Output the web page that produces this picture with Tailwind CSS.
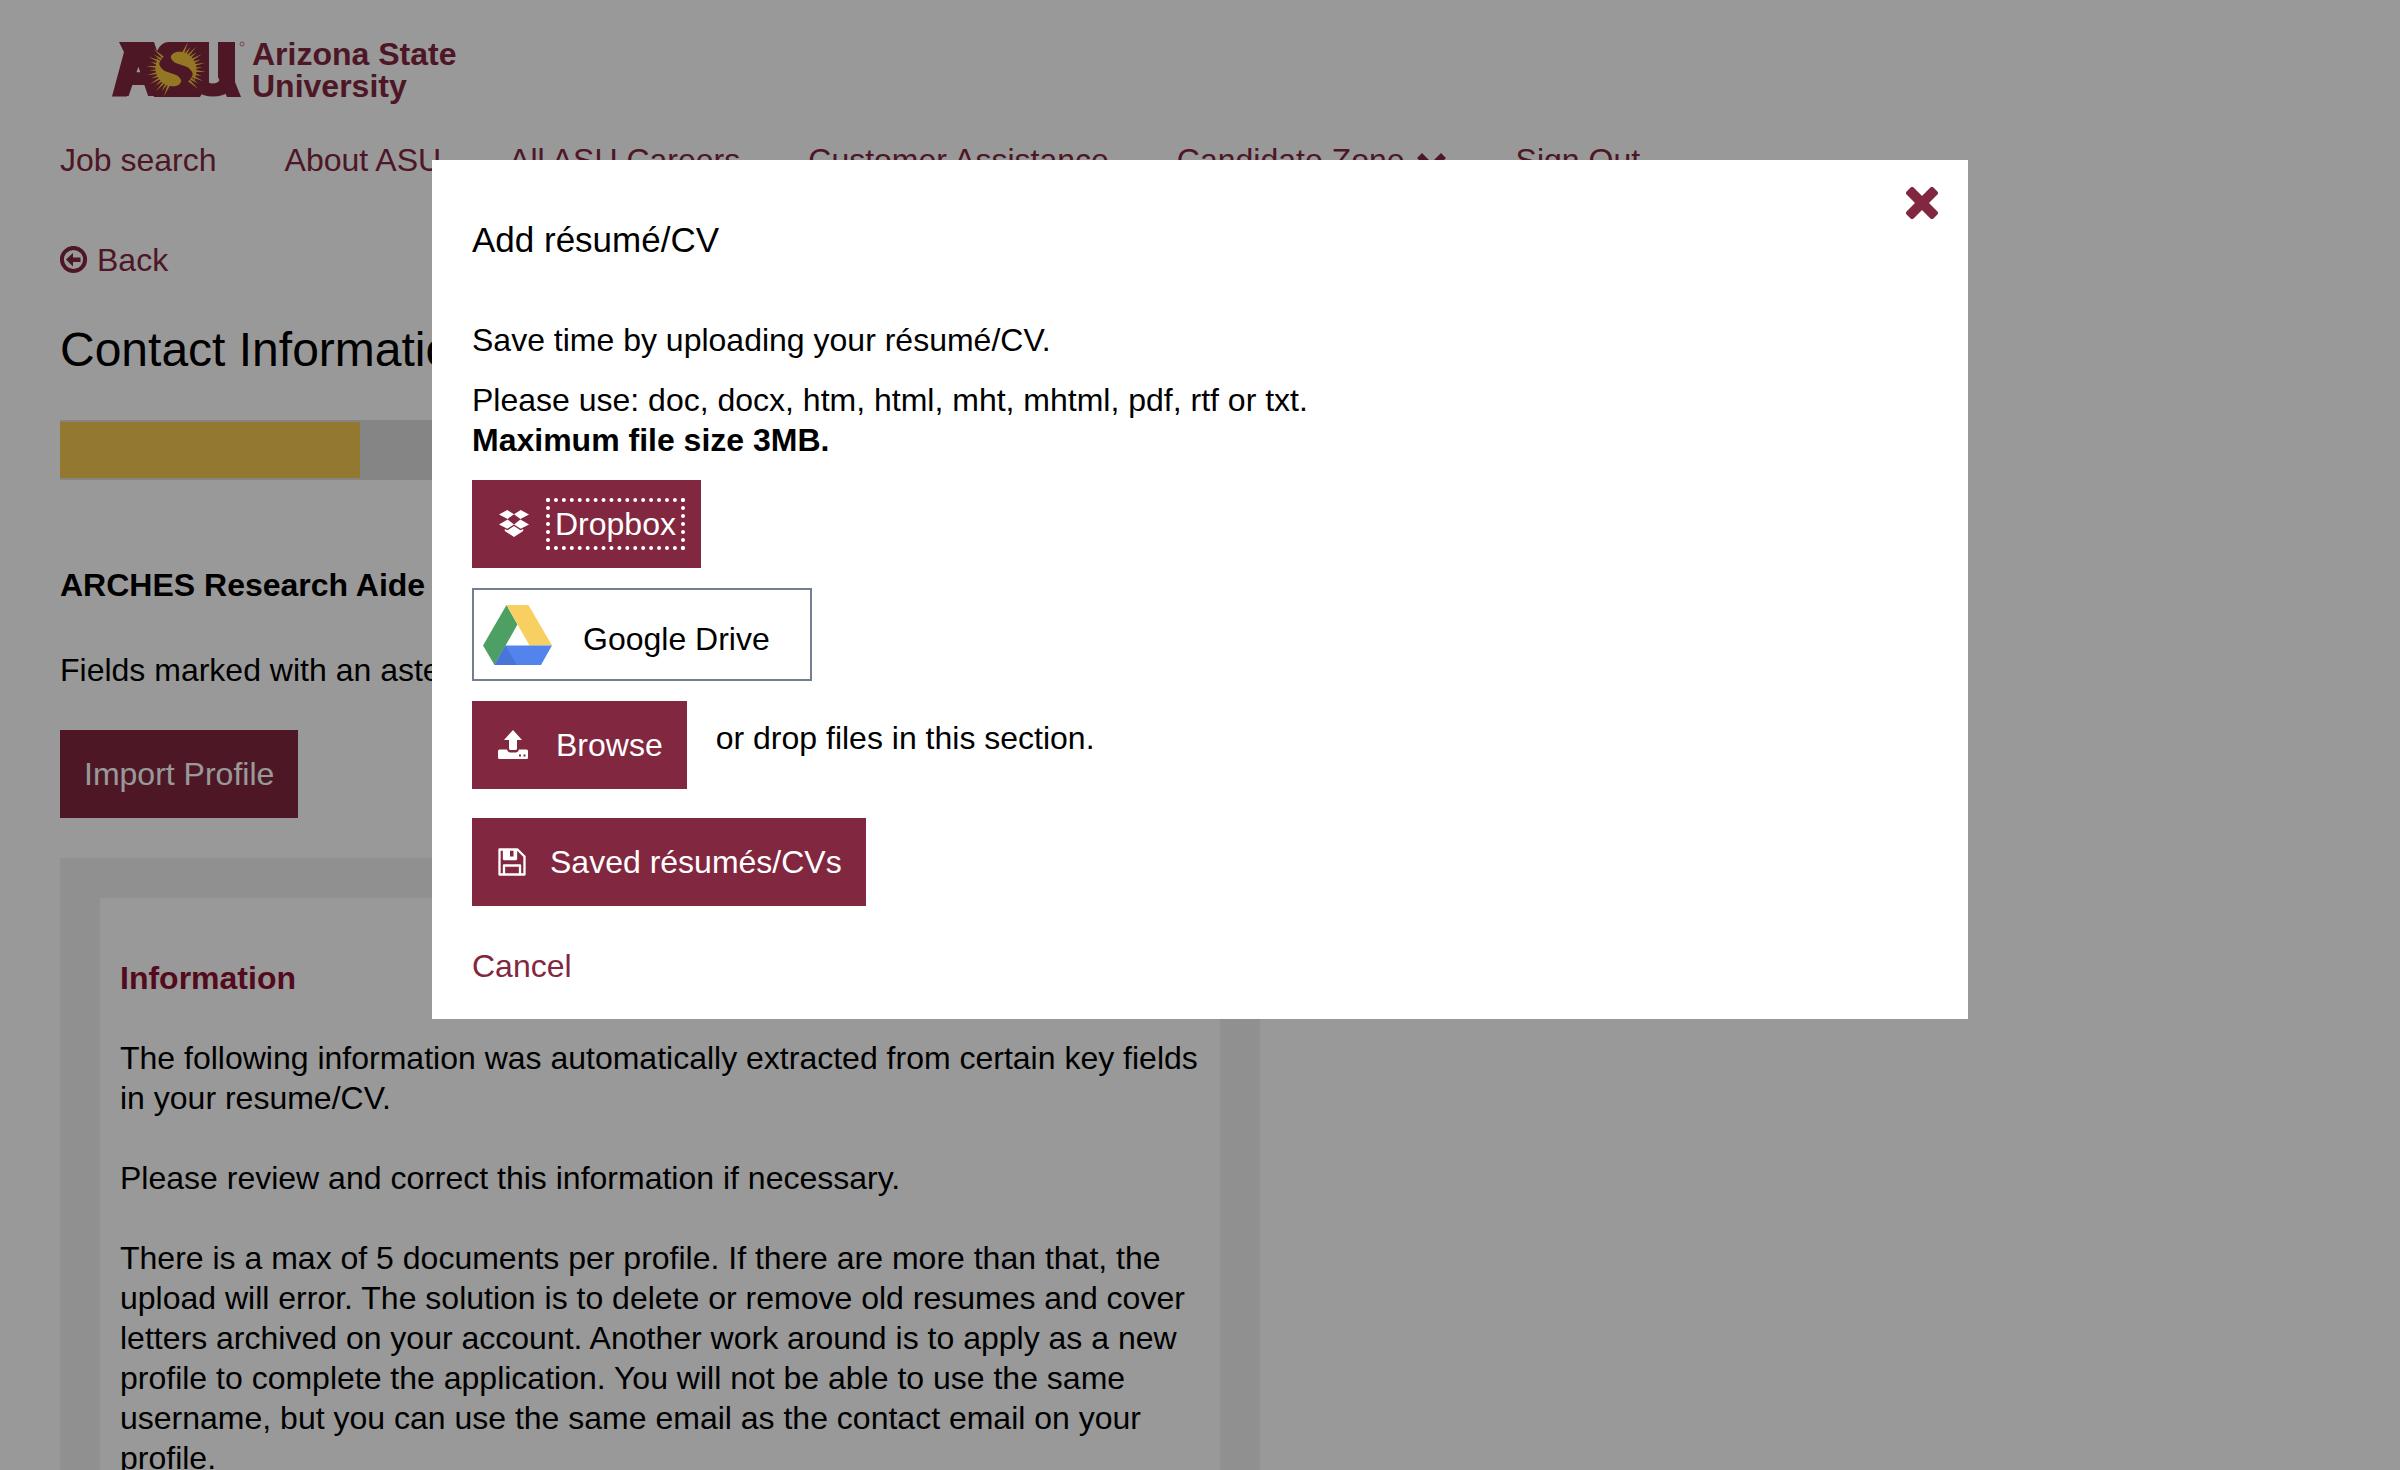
<!DOCTYPE html>
<html lang="en">
<head>
<meta charset="utf-8">
<meta name="viewport" content="width=device-width, initial-scale=1">
<title>Contact Information</title>
<script src="https://cdn.jsdelivr.net/npm/@tailwindcss/browser@4"></script>
</head>
<body class="h-screen overflow-hidden bg-white font-['Liberation_Sans',Arial,sans-serif] text-[32px] leading-10 text-black">

<header>
  <a href="#" aria-label="Arizona State University home" class="flex h-[140px] items-start pt-[38px] pl-[112px] text-[#822740]">
    <svg class="mt-[3px] h-[57px] w-[134px] shrink-0 overflow-visible" viewBox="0 0 134 57" fill="currentColor" font-family="Liberation Sans" font-weight="700" aria-hidden="true">
      <text x="4 45 79" y="52" font-size="62" stroke="currentColor" stroke-width="6">ASU</text>
      <path d="M7 1h35l3 9c3-6 7-9 12-9h40v40L88 56H42L32 16l-7-3L15 55.500H0L12 11z"/>
      <path d="M106 1h17v40l6 15h-14l-9-20z"/>
      <g id="sun" fill="#f7c63e">
        <path d="M58.700 16C60 11 66 10 70 11C80 14 85 22 84.500 30L82.500 40C81.500 32 79 28 75 26C69 23 60 23 58.700 16z"/>
        <path id="rays" d=""/>
      </g>
      <use href="#sun" transform="rotate(180 64 28)"/>
      <circle cx="130" cy="3" r="2" fill="none" stroke="currentColor" stroke-width="0.6"/>
    </svg>
    <span class="pl-[6px] text-[32px] leading-8 font-bold">Arizona State<br>University</span>
  </a>
  <nav class="flex gap-[68px] pl-[60px] text-[#822740]">
    <a href="#">Job search</a>
    <a href="#">About ASU</a>
    <a href="#">All ASU Careers</a>
    <a href="#">Customer Assistance</a>
    <a href="#" class="flex items-center gap-[11px]">Candidate Zone
      <svg class="size-8" viewBox="0 0 32 32" fill="currentColor" aria-hidden="true"><path d="M1 14l5-5 9.500 9.500L25 9l5 5-14.500 14.500z"/></svg>
    </a>
    <a href="#">Sign Out</a>
  </nav>
</header>

<main class="ml-[60px] w-1/2 pt-[60px]">
  <a href="#" class="flex w-fit items-center gap-[9px] text-[#822740]">
    <svg class="size-7" viewBox="0 0 28 28" aria-hidden="true"><circle cx="13.500" cy="13.500" r="11.600" fill="none" stroke="currentColor" stroke-width="4"/><path fill="currentColor" d="M6 13.500l7-6.500v4.500h7.500v4.500h-7.500v4.500z"/></svg>
    Back
  </a>
  <h1 class="mt-10 text-5xl leading-[60px]">Contact Information</h1>
  <div role="progressbar" aria-label="Application progress" aria-valuenow="25" class="mt-10 h-[60px] bg-[#dedede] py-[2px]">
    <div class="h-full w-1/4 bg-[#f5c850]"></div>
  </div>
  <h2 class="mt-[85px] font-bold">ARCHES Research Aide</h2>
  <p class="mt-[45px]">Fields marked with an asterisk (*) are required.</p>
  <button type="button" class="mt-10 block h-[88px] bg-[#822740] px-6 text-white">Import Profile</button>
  <section class="mt-10 bg-[#f0f0f0] p-10">
    <div class="bg-white px-5 py-[60px]">
      <h3 class="font-bold text-[#8c1233]">Information</h3>
      <p class="mt-10">The following information was automatically extracted from certain key fields in your resume/CV.</p>
      <p class="mt-10">Please review and correct this information if necessary.</p>
      <p class="mt-10">There is a max of 5 documents per profile. If there are more than that, the upload will error. The solution is to delete or remove old resumes and cover letters archived on your account. Another work around is to apply as a new profile to complete the application. You will not be able to use the same username, but you can use the same email as the contact email on your profile.</p>
    </div>
  </section>
</main>

<div class="fixed inset-0 bg-black/40">
  <div role="dialog" aria-modal="true" aria-labelledby="dialog-title" class="relative mx-auto mt-40 w-[64%] bg-white px-10 pt-[58px] pb-[33px]">
    <button type="button" aria-label="Close" class="absolute top-[27px] right-7 text-[#822740]">
      <svg class="size-9" viewBox="0 0 36 36" fill="currentColor" aria-hidden="true"><g transform="rotate(45 18 16)"><rect x="-1" y="11" width="38" height="10" rx="2.500"/><rect x="13" y="-3" width="10" height="38" rx="2.500"/></g></svg>
    </button>
    <h2 id="dialog-title" class="text-[35px] leading-[44px]">Add résumé/CV</h2>
    <p class="mt-[58px]">Save time by uploading your résumé/CV.</p>
    <p class="mt-5">Please use: doc, docx, htm, html, mht, mhtml, pdf, rtf or txt.</p>
    <p class="font-bold">Maximum file size 3MB.</p>

    <button type="button" class="mt-5 flex h-[88px] items-center bg-[#822740] pr-4 pl-[26px] text-white">
      <svg class="size-8" viewBox="0 0 32 32" fill="currentColor" aria-hidden="true"><path d="M9.300 2l6.700 4.200-6.400 4.700-8.600-4.400zM22.700 2L16 6.200l6.400 4.700L31 6.500zM1 16.500l8.600-5.100 6.400 5-6.700 4.400zM31 16.500l-8.600-5.100-6.400 5 6.700 4.400zM16 18l-6.500 4.300-2.700-1.300v2l9.200 6 9.200-6v-2l-2.700 1.300z"/></svg>
      <span class="ml-4 border-4 border-dotted border-white px-[5px] py-[2px]">Dropbox</span>
    </button>

    <button type="button" class="mt-5 flex h-[93px] items-center border-2 border-[#737f90] pr-10 pl-[9px]">
      <svg class="h-[60px] w-[69px]" viewBox="0 0 69 60" aria-hidden="true"><path fill="#4d9f63" d="M23.500 0L0 40.500 11.500 60 34.500 19.500z"/><path fill="#f8d062" d="M23.500 0h22L69 40.500H46.500z"/><path fill="#5383ec" d="M22.500 40.500H69L58 60H11.500z"/><path fill="#4a74d8" d="M22.500 40.500L34 60H11.500z"/></svg>
      <span class="ml-[31px] pt-2">Google Drive</span>
    </button>

    <div class="mt-5 flex">
      <button type="button" class="flex h-[88px] items-center bg-[#822740] pr-6 pl-[26px] text-white">
        <svg class="h-8 w-[30px]" viewBox="0 0 30 32" fill="currentColor" aria-hidden="true"><path d="M15 1l9 10h-5v8.500a1.500 1.500 0 0 1-1.500 1.500h-5a1.500 1.500 0 0 1-1.500-1.500V11H6z"/><path fill-rule="evenodd" d="M1.500 20.500h7.500c.5 2 2 3 3.500 3h5c1.500 0 3-1 3.500-3h7.500a1.500 1.500 0 0 1 1.500 1.500v6.500a1.500 1.500 0 0 1-1.500 1.500h-27A1.500 1.500 0 0 1 0 28.500V22A1.500 1.500 0 0 1 1.500 20.500zM21 25.500v2h2v-2zM25.500 25.500v2h2v-2z"/></svg>
        <span class="ml-[28px]">Browse</span>
      </button>
      <p class="ml-[29px] pt-[17px]">or drop files in this section.</p>
    </div>

    <button type="button" class="mt-[29px] flex h-[88px] items-center bg-[#822740] pr-6 pl-[26px] text-white">
      <svg class="size-7" viewBox="0 0 28 28" aria-hidden="true"><path fill="none" stroke="currentColor" stroke-width="2.300" stroke-linejoin="round" d="M1.500 1.500h18l7 7v18h-25zM6 26v-8.500h16V26M6 2v9h12V2"/><path fill="currentColor" d="M6 2h6v9H6zM15.500 2H18v9h-6V8.500h3.500z"/></svg>
      <span class="ml-6">Saved résumés/CVs</span>
    </button>

    <a href="#" class="mt-10 block w-fit text-[#822740]">Cancel</a>
  </div>
</div>

<script>
  // Rays of the sunburst: thin triangles fanned round its centre, drawn for one half and reused for the other.
  let d = '';
  for (let deg = -66; deg <= 48; deg += 9) {
    const at = (r, a) => (64 + r * Math.cos(a * Math.PI / 180)).toFixed(1) + ' ' + (28 + r * Math.sin(a * Math.PI / 180)).toFixed(1);
    d += 'M' + at(17.5, deg - 4) + 'L' + at(deg % 2 ? 26.5 : 30, deg) + 'L' + at(17.5, deg + 4) + 'z';
  }
  document.getElementById('rays').setAttribute('d', d);
</script>
</body>
</html>
